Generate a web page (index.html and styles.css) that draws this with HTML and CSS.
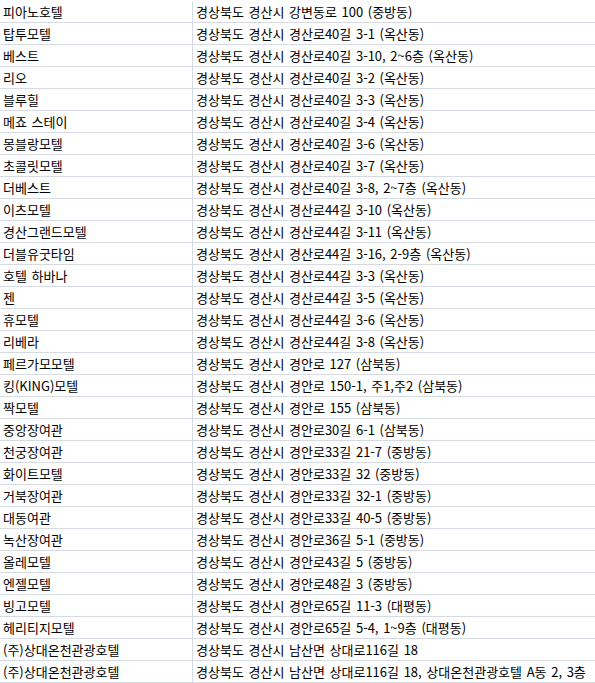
FILE: index.html
```html
<!DOCTYPE html>
<html lang="ko">
<head>
<meta charset="utf-8">
<title>숙박업소 목록</title>
<link rel="stylesheet" href="styles.css">
</head>
<body>
<div class="sheet">
  <div class="row"><div class="name">피아노호텔</div><div class="addr">경상북도 경산시 강변동로 100 (중방동)</div></div>
  <div class="row"><div class="name">탑투모텔</div><div class="addr">경상북도 경산시 경산로40길 3-1 (옥산동)</div></div>
  <div class="row"><div class="name">베스트</div><div class="addr">경상북도 경산시 경산로40길 3-10, 2~6층 (옥산동)</div></div>
  <div class="row"><div class="name">리오</div><div class="addr">경상북도 경산시 경산로40길 3-2 (옥산동)</div></div>
  <div class="row"><div class="name">블루힐</div><div class="addr">경상북도 경산시 경산로40길 3-3 (옥산동)</div></div>
  <div class="row"><div class="name">메죠 스테이</div><div class="addr">경상북도 경산시 경산로40길 3-4 (옥산동)</div></div>
  <div class="row"><div class="name">몽블랑모텔</div><div class="addr">경상북도 경산시 경산로40길 3-6 (옥산동)</div></div>
  <div class="row"><div class="name">초콜릿모텔</div><div class="addr">경상북도 경산시 경산로40길 3-7 (옥산동)</div></div>
  <div class="row"><div class="name">더베스트</div><div class="addr">경상북도 경산시 경산로40길 3-8, 2~7층 (옥산동)</div></div>
  <div class="row"><div class="name">이츠모텔</div><div class="addr">경상북도 경산시 경산로44길 3-10 (옥산동)</div></div>
  <div class="row"><div class="name">경산그랜드모텔</div><div class="addr">경상북도 경산시 경산로44길 3-11 (옥산동)</div></div>
  <div class="row"><div class="name">더블유굿타임</div><div class="addr">경상북도 경산시 경산로44길 3-16, 2-9층 (옥산동)</div></div>
  <div class="row"><div class="name">호텔 하바나</div><div class="addr">경상북도 경산시 경산로44길 3-3 (옥산동)</div></div>
  <div class="row"><div class="name">젠</div><div class="addr">경상북도 경산시 경산로44길 3-5 (옥산동)</div></div>
  <div class="row"><div class="name">휴모텔</div><div class="addr">경상북도 경산시 경산로44길 3-6 (옥산동)</div></div>
  <div class="row"><div class="name">리베라</div><div class="addr">경상북도 경산시 경산로44길 3-8 (옥산동)</div></div>
  <div class="row"><div class="name">페르가모모텔</div><div class="addr">경상북도 경산시 경안로 127 (삼북동)</div></div>
  <div class="row"><div class="name">킹(KING)모텔</div><div class="addr">경상북도 경산시 경안로 150-1, 주1,주2 (삼북동)</div></div>
  <div class="row"><div class="name">짝모텔</div><div class="addr">경상북도 경산시 경안로 155 (삼북동)</div></div>
  <div class="row"><div class="name">중앙장여관</div><div class="addr">경상북도 경산시 경안로30길 6-1 (삼북동)</div></div>
  <div class="row"><div class="name">천궁장여관</div><div class="addr">경상북도 경산시 경안로33길 21-7 (중방동)</div></div>
  <div class="row"><div class="name">화이트모텔</div><div class="addr">경상북도 경산시 경안로33길 32 (중방동)</div></div>
  <div class="row"><div class="name">거북장여관</div><div class="addr">경상북도 경산시 경안로33길 32-1 (중방동)</div></div>
  <div class="row"><div class="name">대동여관</div><div class="addr">경상북도 경산시 경안로33길 40-5 (중방동)</div></div>
  <div class="row"><div class="name">녹산장여관</div><div class="addr">경상북도 경산시 경안로36길 5-1 (중방동)</div></div>
  <div class="row"><div class="name">올레모텔</div><div class="addr">경상북도 경산시 경안로43길 5 (중방동)</div></div>
  <div class="row"><div class="name">엔젤모텔</div><div class="addr">경상북도 경산시 경안로48길 3 (중방동)</div></div>
  <div class="row"><div class="name">빙고모텔</div><div class="addr">경상북도 경산시 경안로65길 11-3 (대평동)</div></div>
  <div class="row"><div class="name">헤리티지모텔</div><div class="addr">경상북도 경산시 경안로65길 5-4, 1~9층 (대평동)</div></div>
  <div class="row"><div class="name">(주)상대온천관광호텔</div><div class="addr">경상북도 경산시 남산면 상대로116길 18</div></div>
  <div class="row"><div class="name">(주)상대온천관광호텔</div><div class="addr">경상북도 경산시 남산면 상대로116길 18, 상대온천관광호텔 A동 2, 3층</div></div>
</div>
</body>
</html>
```

FILE: styles.css
```css
html, body {
  margin: 0;
  padding: 0;
  background: #ffffff;
}

body {
  font-family: "Noto Sans CJK KR", "Noto Sans", sans-serif;
  font-size: 13px;
  word-spacing: 1px;
  color: #000000;
  overflow: hidden;
}

.sheet {
  padding-top: 1px;
}

.row {
  display: grid;
  grid-template-columns: 193px 1fr;
  height: 21px;
  border-bottom: 1px solid #d6dbe3;
}

.name,
.addr {
  display: flex;
  align-items: center;
  padding-left: 3px;
  white-space: nowrap;
  overflow: hidden;
  line-height: 21px;
}

.name {
  border-right: 1px solid #d6dbe3;
}
```
